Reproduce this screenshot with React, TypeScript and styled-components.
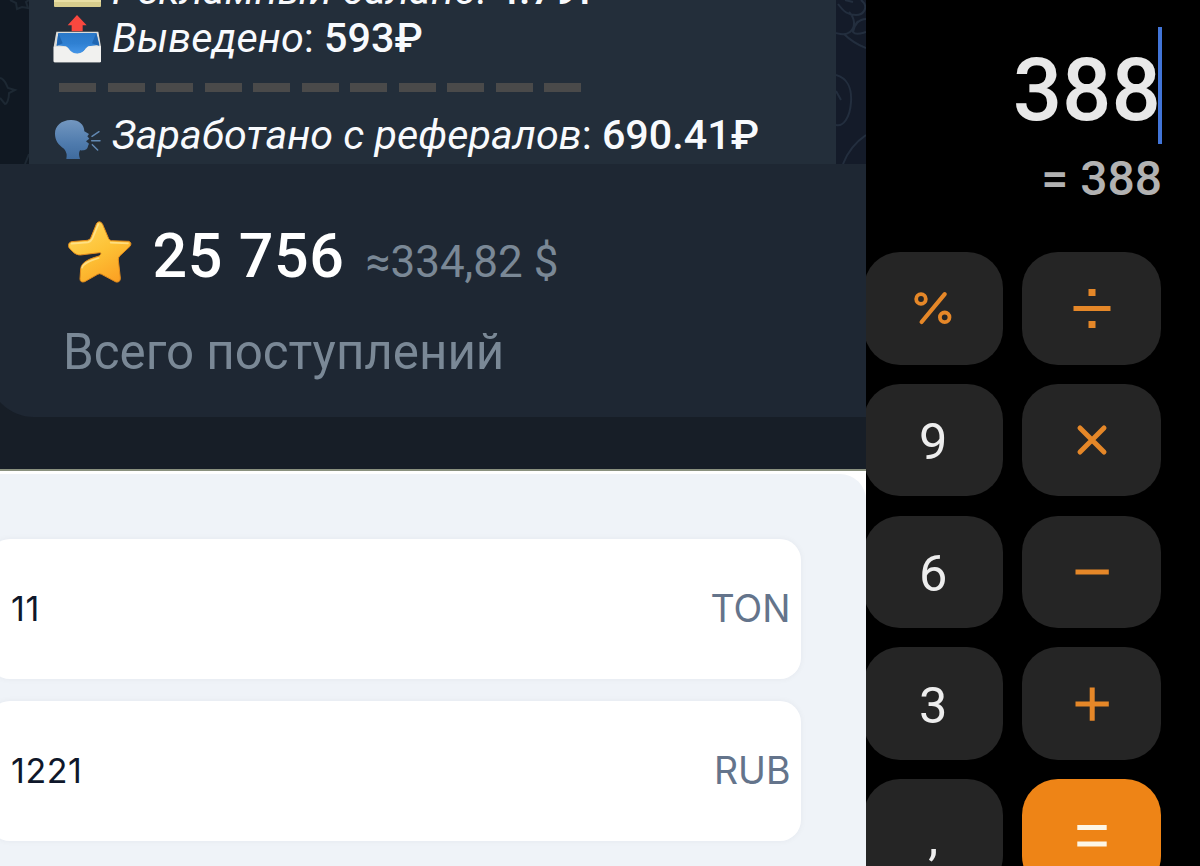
import React from 'react';
import styled, { createGlobalStyle } from 'styled-components';

const GlobalStyle = createGlobalStyle`
  * {
    box-sizing: border-box;
  }

  body {
    margin: 0;
    background: #000;
    overflow: hidden;
  }
`;

const Screen = styled.div`
  display: flex;
  width: 1200px;
  height: 866px;
  overflow: hidden;
  background: #000;
  font-family: Roboto, 'Liberation Sans', sans-serif;
`;

const LeftColumn = styled.div`
  display: flex;
  flex-direction: column;
  width: 866px;
  height: 866px;
  overflow: hidden;
`;

/* chat */

const Chat = styled.div`
  display: flex;
  flex: none;
  height: 164px;
  overflow: hidden;
  background: #101822;
`;

const Wallpaper = styled.svg<{ $tint: string }>`
  display: block;
  flex: none;
  height: 164px;
  background: ${(p) => p.$tint};
`;

const Bubble = styled.div`
  width: 807px;
  height: 164px;
  overflow: hidden;
  padding-left: 24px;
  background: #232e3a;
`;

const Lines = styled.div`
  margin-top: -34.5px;
`;

const Line = styled.div`
  display: flex;
  align-items: flex-start;
  height: 48.5px;
  line-height: 48.5px;
  font-size: 41.3px;
  color: #f8fafd;
  white-space: pre;
`;

const Emoji = styled.svg<{ $drop?: number }>`
  display: block;
  flex: none;
  margin: ${(p) => p.$drop ?? 0}px 10px 0 0;
`;

const Label = styled.span`
  font-style: italic;
`;

const Amount = styled.span`
  font-weight: 500;
`;

const Dashes = styled.div`
  display: flex;
  gap: 11.5px;
  height: 48.5px;
  padding: 20px 0 0 6px;
`;

const Dash = styled.div`
  width: 37px;
  height: 9px;
  background: #4a4a4a;
`;

/* stars balance */

const StarsArea = styled.div`
  flex: none;
  height: 305px;
  background: #171e27;
`;

const StarsCard = styled.div`
  height: 253px;
  margin-left: -12px;
  padding: 56px 0 0 79px;
  background: #1e2733;
  border-bottom-left-radius: 46px;
`;

const StarsRow = styled.div`
  display: flex;
  height: 72px;
  line-height: 72px;
  white-space: pre;
`;

const StarsTotal = styled.span`
  margin-left: 19.5px;
  font-size: 61px;
  font-weight: 500;
  letter-spacing: 0.6px;
  color: #fff;
`;

const StarsUsd = styled.span`
  margin-left: 21px;
  padding-top: 6px;
  font-size: 44px;
  color: #7a8896;
`;

const StarsCaption = styled.div`
  margin: 30px 0 0 -4px;
  font-size: 49.3px;
  line-height: 60px;
  color: #7a8896;
`;

/* converter */

const Converter = styled.div`
  flex: 1;
  min-height: 0;
  padding-top: 3px;
  overflow: hidden;
  background: #fff;
  border-top: 2px solid #8a917f;
`;

const ConverterBody = styled.div`
  display: flex;
  flex-direction: column;
  gap: 22px;
  height: 400px;
  padding: 64.5px 65px 0 0;
  background: #eff3f8;
  border-top-right-radius: 26px;
`;

const Field = styled.div`
  display: flex;
  flex: none;
  align-items: center;
  justify-content: space-between;
  height: 140px;
  margin-left: -11px;
  padding: 0 10.5px 0 22px;
  background: #fff;
  border-radius: 21px;
  box-shadow: 0 0 6px rgba(30, 40, 50, 0.05);
  font-family: Inter, 'Liberation Sans', sans-serif;
`;

const Value = styled.span`
  font-size: 34px;
  letter-spacing: 0.6px;
  color: #0f172a;
`;

const Currency = styled.span`
  font-size: 37.5px;
  color: #64748b;
`;

/* calculator */

const Calculator = styled.div`
  width: 334px;
  height: 866px;
  overflow: hidden;
  background: #000;
`;

const Display = styled.div`
  display: flex;
  flex-direction: column;
  align-items: flex-end;
  height: 252px;
  padding: 27px 38px 0 0;
`;

const Expression = styled.div`
  display: flex;
  align-items: center;
  height: 117px;
  font-size: 87px;
  font-weight: 500;
  line-height: 117px;
  color: #e8e8e8;
`;

const Digits = styled.span`
  padding-top: 9px;
`;

const Caret = styled.div`
  width: 4px;
  height: 117px;
  margin-left: -3px;
  background: #4275d8;
`;

const Result = styled.div`
  margin-top: 6px;
  font-size: 48px;
  font-weight: 500;
  line-height: 58px;
  white-space: pre;
  color: #b2b2b2;
`;

const Keypad = styled.div`
  display: grid;
  grid-template-columns: 138.5px 139.5px;
  grid-auto-rows: 112.5px;
  gap: 19.3px;
  margin-left: -2px;
`;

const Key = styled.div<{ $accent?: boolean }>`
  display: flex;
  align-items: center;
  justify-content: center;
  padding-top: ${(p) => (p.$accent ? 0 : 3)}px;
  border-radius: 36px;
  background: ${(p) => (p.$accent ? '#ee8416' : '#252525')};
  color: #ededed;
  font-size: 50.5px;
`;

const OpIcon = styled.svg<{ $drop?: number }>`
  display: block;
  width: 44px;
  height: 44px;
  margin-top: ${(p) => p.$drop ?? -3}px;
  fill: none;
  stroke: #e58728;
  stroke-width: 5;
`;

const CardIcon = () => (
  <Emoji width="49" height="48" viewBox="0 0 49 48" $drop={-6}>
    <rect x="1" y="10" width="47" height="37" rx="1" fill="#d8cd8d" />
    <rect x="1" y="36" width="47" height="6" fill="#e9dfa4" />
  </Emoji>
);

const OutboxIcon = () => (
  <Emoji width="49" height="50" viewBox="159 42 147 150" $drop={0}>
    <defs>
      <linearGradient id="tray" x1="0" y1="0" x2="0" y2="1">
        <stop offset="0" stopColor="#2a78c8" />
        <stop offset="0.5" stopColor="#2f80d2" />
        <stop offset="1" stopColor="#4596e8" />
      </linearGradient>
    </defs>
    <path d="M169 95H295L303 140V184Q303 187 300 187H164Q161 187 161 184V140Z" fill="#dcdcd8" />
    <path d="M175 99H289L298 134L267 139C256 141 254 161 232 161C209 161 207 141 197 139L170 136Z" fill="url(#tray)" />
    <path d="M175 99L188 130L170 138ZM289 99L276 130L298 138Z" fill="#1f66b2" />
    <path d="M161 140H197C207 141 209 161 232 161C254 161 256 141 267 139H303V184Q303 187 300 187H164Q161 187 161 184Z" fill="#f1f1ef" />
    <path d="M231 45L260 76H248V94H215V76H203Z" fill="#f9483f" />
  </Emoji>
);

const SpeakingIcon = () => (
  <Emoji width="49" height="50" viewBox="159 345 147 150" $drop={4}>
    <defs>
      <linearGradient id="head" x1="0" y1="0" x2="0" y2="1">
        <stop offset="0" stopColor="#7397c0" />
        <stop offset="0.6" stopColor="#4f7bad" />
        <stop offset="1" stopColor="#3f6b9e" />
      </linearGradient>
    </defs>
    <path
      d="M212 360C236 359 253 373 253 394L267 402L262 409L268 416L258 424L267 431L264 438C263 449 254 452 240 451Q234 461 240 477H199Q203 459 192 446C174 434 165 420 165 401C165 377 184 361 212 360Z"
      fill="url(#head)"
    />
    <path d="M276 409L297 395M275 422H300M277 434L293 450" stroke="#6289b3" strokeWidth="4.5" strokeLinecap="round" />
  </Emoji>
);

const StarIcon = () => (
  <svg width="66" height="72" viewBox="81 60 198 216">
    <defs>
      <linearGradient id="star" x1="0.2" y1="0" x2="0.8" y2="1">
        <stop offset="0" stopColor="#ffd65a" />
        <stop offset="0.5" stopColor="#fdc236" />
        <stop offset="1" stopColor="#fb9f22" />
      </linearGradient>
    </defs>
    <path
      d="M170 70Q178 60 187 71L206 116Q208 121 214 122L266 124Q277 128 270 139L239 168Q234 173 235 180L241 234Q241 248 228 246L185 223Q179 219 173 223L134 245Q121 249 120 237L122 207C124 185 150 176 177 168C182 165 186 158 179 158L121 165C105 165 96 153 87 143Q82 129 94 125L142 121Q149 120 152 114Z"
      fill="url(#star)"
      stroke="#e18a1c"
      strokeWidth="3"
      strokeLinejoin="round"
    />
    <path
      d="M175 73L157 116Q153 125 144 127L95 131M212 128L264 130M126 203C131 189 150 182 176 174"
      fill="none"
      stroke="#ffe9a0"
      strokeWidth="5"
      strokeLinecap="round"
      opacity="0.7"
    />
  </svg>
);

const Percent = () => (
  <OpIcon viewBox="0 0 44 44">
    <circle cx="10" cy="13" r="4.8" strokeWidth="3.8" />
    <circle cx="33.7" cy="31.3" r="4.8" strokeWidth="3.8" />
    <path d="M33.7 8.2L10.6 36" strokeWidth="4.2" strokeLinecap="round" />
  </OpIcon>
);

const Divide = () => (
  <OpIcon viewBox="0 0 44 44">
    <path d="M3.5 22.5H40.5" />
    <path d="M18.5 3H25.5V10H18.5ZM18.5 35H25.5V42H18.5Z" fill="#e58728" stroke="none" />
  </OpIcon>
);

const Multiply = () => (
  <OpIcon viewBox="0 0 44 44">
    <path d="M10 10L34 34M34 10L10 34" strokeLinecap="round" />
  </OpIcon>
);

const Minus = () => (
  <OpIcon viewBox="0 0 44 44">
    <path d="M5.5 22H38.8" />
  </OpIcon>
);

const Plus = () => (
  <OpIcon viewBox="0 0 44 44">
    <path d="M5.5 22H38.8M22.2 5.4V38.7" />
  </OpIcon>
);

const Equals = () => (
  <OpIcon viewBox="0 0 44 44" $drop={0}>
    <path d="M7.3 14.5H36.7M7.3 31H36.7" stroke="#fdf6e6" />
  </OpIcon>
);

const keys: { id: string; face: React.ReactNode; accent?: boolean }[] = [
  { id: 'percent', face: <Percent /> },
  { id: 'divide', face: <Divide /> },
  { id: 'nine', face: '9' },
  { id: 'multiply', face: <Multiply /> },
  { id: 'six', face: '6' },
  { id: 'minus', face: <Minus /> },
  { id: 'three', face: '3' },
  { id: 'plus', face: <Plus /> },
  { id: 'comma', face: ',' },
  { id: 'equals', face: <Equals />, accent: true },
];

const App = () => {
  return (
    <>
      <GlobalStyle />
      <Screen>
        <LeftColumn>
          <Chat>
            <Wallpaper $tint="#101822" width="29" viewBox="0 0 29 164">
              <path
                d="M10 0L16 3L17 9L22 7L28 8L26 2L29 0M0 78C5 79 6 84 8 88L15 90L9 93C9 99 7 104 5 104L0 98M25 164L29 154"
                fill="none"
                stroke="#1d2833"
                strokeWidth="2"
              />
            </Wallpaper>
            <Bubble>
              <Lines>
                <Line>
                  <CardIcon />
                  <Label>Рекламный баланс</Label>
                  <span>: </span>
                  <Amount>4.79₽</Amount>
                </Line>
                <Line>
                  <OutboxIcon />
                  <Label>Выведено</Label>
                  <span>: </span>
                  <Amount>593₽</Amount>
                </Line>
                <Dashes>
                  {Array.from({ length: 11 }, (_, i) => (
                    <Dash key={i} />
                  ))}
                </Dashes>
                <Line>
                  <SpeakingIcon />
                  <Label>Заработано с рефералов</Label>
                  <span>: </span>
                  <Amount>690.41₽</Amount>
                </Line>
              </Lines>
            </Bubble>
            <Wallpaper $tint="#141b29" width="30" viewBox="0 0 30 164">
              <path
                d="M2 4C8 12 12 15 20 15C28 15 31 8 28 3L25 0M9 0L17 2M13 12C19 18 20 27 14 32C9 36 4 34 0 33M30 19C23 19 18 25 17 32C20 36 26 33 30 32M17 28L22 21M8 34C15 41 22 45 30 48M0 75C11 78 16 88 15 102C14 118 7 127 0 125M0 91L5 100M7 164C12 151 21 141 30 135"
                fill="none"
                stroke="#232e3e"
                strokeWidth="2"
              />
            </Wallpaper>
          </Chat>

          <StarsArea>
            <StarsCard>
              <StarsRow>
                <StarIcon />
                <StarsTotal>25 756</StarsTotal>
                <StarsUsd>≈334,82 $</StarsUsd>
              </StarsRow>
              <StarsCaption>Всего поступлений</StarsCaption>
            </StarsCard>
          </StarsArea>

          <Converter>
            <ConverterBody>
              <Field>
                <Value>11</Value>
                <Currency>TON</Currency>
              </Field>
              <Field>
                <Value>1221</Value>
                <Currency>RUB</Currency>
              </Field>
            </ConverterBody>
          </Converter>
        </LeftColumn>

        <Calculator>
          <Display>
            <Expression>
              <Digits>388</Digits>
              <Caret />
            </Expression>
            <Result>= 388</Result>
          </Display>
          <Keypad>
            {keys.map((k) => (
              <Key key={k.id} $accent={k.accent}>
                {k.face}
              </Key>
            ))}
          </Keypad>
        </Calculator>
      </Screen>
    </>
  );
};

export default App;
